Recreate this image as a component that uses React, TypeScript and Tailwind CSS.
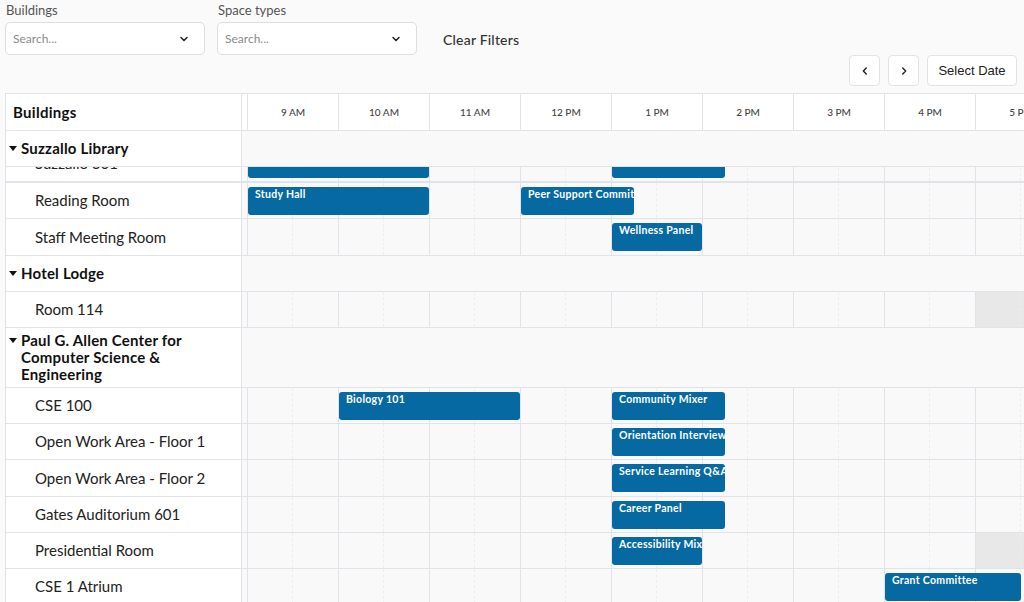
import React from "react";

type Ev = { title: string; start: number; dur: number };
type Room = { name: string; events: Ev[]; blocked?: number[] };
type Group = { name: string; rooms: Room[]; partial?: Room };

const HOURS = ["9 AM", "10 AM", "11 AM", "12 PM", "1 PM", "2 PM", "3 PM", "4 PM", "5 PM"];
const COL = 91;

const groups: Group[] = [
  {
    name: "Suzzallo Library",
    partial: {
      name: "Suzzallo 301",
      events: [
        { title: "", start: 9, dur: 2 },
        { title: "", start: 13, dur: 1.25 },
      ],
    },
    rooms: [
      {
        name: "Reading Room",
        events: [
          { title: "Study Hall", start: 9, dur: 2 },
          { title: "Peer Support Committee", start: 12, dur: 1.25 },
        ],
      },
      { name: "Staff Meeting Room", events: [{ title: "Wellness Panel", start: 13, dur: 1 }] },
    ],
  },
  {
    name: "Hotel Lodge",
    rooms: [{ name: "Room 114", events: [], blocked: [17] }],
  },
  {
    name: "Paul G. Allen Center for Computer Science & Engineering",
    rooms: [
      {
        name: "CSE 100",
        events: [
          { title: "Biology 101", start: 10, dur: 2 },
          { title: "Community Mixer", start: 13, dur: 1.25 },
        ],
      },
      { name: "Open Work Area - Floor 1", events: [{ title: "Orientation Interviews", start: 13, dur: 1.25 }] },
      { name: "Open Work Area - Floor 2", events: [{ title: "Service Learning Q&A", start: 13, dur: 1.25 }] },
      { name: "Gates Auditorium 601", events: [{ title: "Career Panel", start: 13, dur: 1.25 }] },
      { name: "Presidential Room", events: [{ title: "Accessibility Mixer", start: 13, dur: 1 }], blocked: [17] },
      { name: "CSE 1 Atrium", events: [{ title: "Grant Committee", start: 16, dur: 1.5 }] },
    ],
  },
];

const Chevron = () => (
  <svg width="12" height="12" viewBox="0 0 24 24" fill="none" stroke="#222" strokeWidth="3" strokeLinecap="round" strokeLinejoin="round">
    <path d="M6 9l6 6 6-6" />
  </svg>
);

const Caret = () => (
  <svg width="8" height="5" viewBox="0 0 8 5" className="shrink-0 mt-[6px]">
    <path d="M0 0h8L4 5z" fill="#111" />
  </svg>
);

const Filter = ({ label }: { label: string }) => (
  <div className="flex flex-col w-[200px]">
    <div className="text-[13px] leading-[16px] text-[#555] pl-[1px]">{label}</div>
    <div className="mt-[4px] h-[33px] bg-white border border-[#dedede] rounded-[5px] flex items-center justify-between pl-[7px] pr-[14px]">
      <span className="text-[12px] text-[#8a8a8a]">Search...</span>
      <Chevron />
    </div>
  </div>
);

const TimeCells = ({ blocked = [] }: { blocked?: number[] }) => (
  <div className="flex h-full">
    <div className="w-[6px] shrink-0 border-r border-[#e1e3e8]" />
    {HOURS.map((h, i) => (
      <div
        key={h}
        className={`w-[91px] shrink-0 flex border-r border-[#e1e3e8] ${blocked.includes(9 + i) ? "bg-[#e8e8e8]" : ""}`}
      >
        <div className="w-[45px] border-r border-dashed border-[#eceef1]" />
      </div>
    ))}
  </div>
);

const Events = ({ events }: { events: Ev[] }) => (
  <div className="absolute inset-y-0 left-[6px] right-0">
    {events.map((e) => (
      <div
        key={e.title + e.start}
        className="absolute top-[4px] h-[28px] bg-[#0769a2] rounded-[3px] px-[7px] overflow-hidden whitespace-nowrap text-white text-[10.5px] tracking-[0.3px] font-bold leading-[14px]"
        style={{ left: (e.start - 9) * COL, width: e.dur * COL - 1 }}
      >
        {e.title}
      </div>
    ))}
  </div>
);

const RoomRow = ({ room }: { room: Room }) => (
  <div className="flex h-[36.25px] border-b border-[#e1e3e8]">
    <div className="w-[236px] shrink-0 bg-white border-r border-[#e1e3e8] flex items-center pl-[29px] text-[15px] text-[#222]">
      {room.name}
    </div>
    <div className="relative flex-1 bg-[#f9f9fa]">
      <TimeCells blocked={room.blocked} />
      <Events events={room.events} />
    </div>
  </div>
);

const App: React.FC = () => {
  return (
    <div className="h-screen w-full overflow-hidden bg-[#fafafa] font-['Lato','Open_Sans',sans-serif]">
      <div className="flex items-start px-[5px] pt-[2px]">
        <Filter label="Buildings" />
        <div className="ml-[12px]">
          <Filter label="Space types" />
        </div>
        <div className="ml-[26px] mt-[27px] text-[14px] tracking-[0.2px] text-[#333] font-medium">Clear Filters</div>
      </div>
      <div className="flex justify-end gap-[8px] pr-[7px] font-['Liberation_Sans',Arial,sans-serif] text-[13px] text-[#222]">
        <div className="w-[31px] h-[31px] bg-white border border-[#e3e3e3] rounded-[4px] flex items-center justify-center">
          <svg width="10" height="10" viewBox="0 0 24 24" fill="none" stroke="#222" strokeWidth="3.5" strokeLinecap="round" strokeLinejoin="round">
            <path d="M15 5l-7 7 7 7" />
          </svg>
        </div>
        <div className="w-[31px] h-[31px] bg-white border border-[#e3e3e3] rounded-[4px] flex items-center justify-center">
          <svg width="10" height="10" viewBox="0 0 24 24" fill="none" stroke="#222" strokeWidth="3.5" strokeLinecap="round" strokeLinejoin="round">
            <path d="M9 5l7 7-7 7" />
          </svg>
        </div>
        <div className="w-[90px] h-[31px] bg-white border border-[#e3e3e3] rounded-[4px] flex items-center justify-center">
          Select Date
        </div>
      </div>

      <div className="ml-[5px] mt-[7px] border-l border-t border-[#e1e3e8]">
        {/* header */}
        <div className="flex h-[37px] border-b border-[#e1e3e8]">
          <div className="w-[236px] shrink-0 bg-white border-r border-[#e1e3e8] flex items-center pl-[7px] text-[15px] tracking-[0.3px] font-bold text-[#111]">
            Buildings
          </div>
          <div className="flex bg-white">
            <div className="w-[6px] shrink-0 border-r border-[#e1e3e8]" />
            {HOURS.map((h) => (
              <div
                key={h}
                className="w-[91px] shrink-0 border-r border-[#e1e3e8] flex items-center justify-center text-[10px] font-medium text-[#444]"
              >
                {h}
              </div>
            ))}
          </div>
        </div>

        {groups.map((g) => (
          <React.Fragment key={g.name}>
            <div className="flex min-h-[36px] border-b border-[#e1e3e8]">
              <div className="w-[236px] shrink-0 bg-white border-r border-[#e1e3e8] flex items-center pl-[3px] pr-[28px] py-[4px]">
                <div className="flex items-start gap-[4px] text-[15px] leading-[17px] tracking-[0.2px] font-bold text-[#111]">
                  <Caret />
                  <span>{g.name}</span>
                </div>
              </div>
              <div className="flex-1 bg-[#f9f9fa]" />
            </div>
            {g.partial && (
              <div className="h-[16px] overflow-hidden border-b border-[#e1e3e8]">
                <div className="mt-[-21px]">
                  <RoomRow room={g.partial} />
                </div>
              </div>
            )}
            {g.rooms.map((r) => (
              <RoomRow key={r.name} room={r} />
            ))}
          </React.Fragment>
        ))}
      </div>
    </div>
  );
};

export default App;
